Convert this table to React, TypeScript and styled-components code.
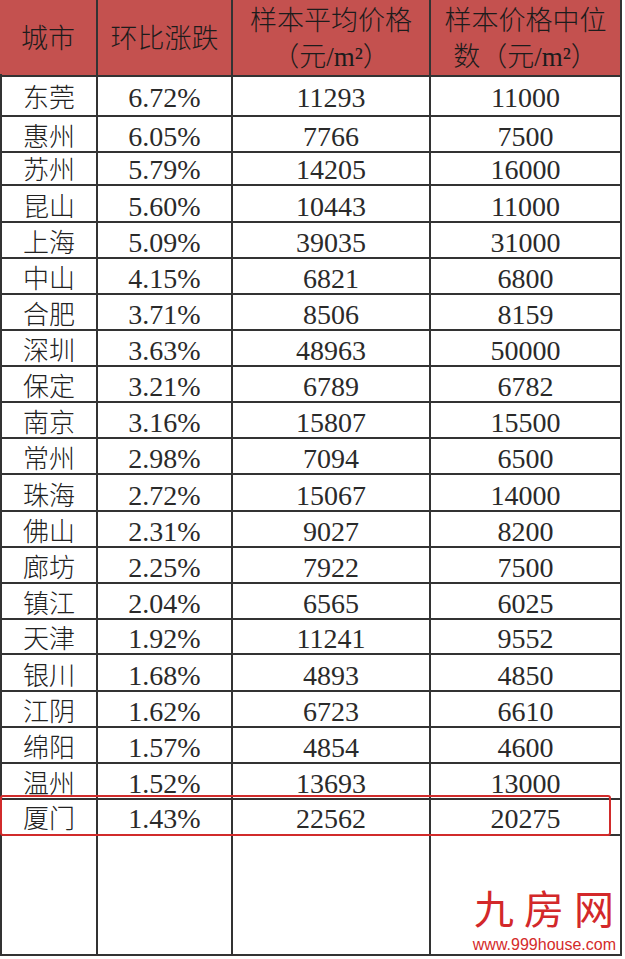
import React from 'react';
import styled, { createGlobalStyle } from 'styled-components';

const rows = [
  { city: '东莞', change: '6.72%', avg: '11293', median: '11000', h: 43 },
  { city: '惠州', change: '6.05%', avg: '7766', median: '7500', h: 33 },
  { city: '苏州', change: '5.79%', avg: '14205', median: '16000', h: 36 },
  { city: '昆山', change: '5.60%', avg: '10443', median: '11000', h: 37 },
  { city: '上海', change: '5.09%', avg: '39035', median: '31000', h: 36 },
  { city: '中山', change: '4.15%', avg: '6821', median: '6800', h: 35 },
  { city: '合肥', change: '3.71%', avg: '8506', median: '8159', h: 37 },
  { city: '深圳', change: '3.63%', avg: '48963', median: '50000', h: 36 },
  { city: '保定', change: '3.21%', avg: '6789', median: '6782', h: 36 },
  { city: '南京', change: '3.16%', avg: '15807', median: '15500', h: 36 },
  { city: '常州', change: '2.98%', avg: '7094', median: '6500', h: 36 },
  { city: '珠海', change: '2.72%', avg: '15067', median: '14000', h: 37 },
  { city: '佛山', change: '2.31%', avg: '9027', median: '8200', h: 36 },
  { city: '廊坊', change: '2.25%', avg: '7922', median: '7500', h: 36 },
  { city: '镇江', change: '2.04%', avg: '6565', median: '6025', h: 35 },
  { city: '天津', change: '1.92%', avg: '11241', median: '9552', h: 36 },
  { city: '银川', change: '1.68%', avg: '4893', median: '4850', h: 37 },
  { city: '江阴', change: '1.62%', avg: '6723', median: '6610', h: 36 },
  { city: '绵阳', change: '1.57%', avg: '4854', median: '4600', h: 36 },
  { city: '温州', change: '1.52%', avg: '13693', median: '13000', h: 34 },
  { city: '厦门', change: '1.43%', avg: '22562', median: '20275', h: 38, marked: true },
];

export default function App() {
  return (
    <>
      <GlobalStyle />
      <Page>
        <Table>
          <HeaderRow>
            <HeaderCell>城市</HeaderCell>
            <HeaderCell>环比涨跌</HeaderCell>
            <HeaderCell>
              样本平均价格
              <br />
              （元/m²）
            </HeaderCell>
            <HeaderCell>
              样本价格中位
              <br />
              数（元/m²）
            </HeaderCell>
          </HeaderRow>
          {rows.map((r) => (
            <Row key={r.city} $h={r.h}>
              <Cell $kind="city">{r.city}</Cell>
              <Cell $kind="num">{r.change}</Cell>
              <Cell $kind="num">{r.avg}</Cell>
              <Cell $kind="num">{r.median}</Cell>
              {r.marked && <Highlight />}
            </Row>
          ))}
          <Row $h={120}>
            <Cell $kind="city" />
            <Cell $kind="num" />
            <Cell $kind="num" />
            <LogoCell>
              <LogoName>九房网</LogoName>
              <LogoUrl>www.999house.com</LogoUrl>
            </LogoCell>
          </Row>
        </Table>
      </Page>
    </>
  );
}

const GlobalStyle = createGlobalStyle`
  html, body {
    margin: 0;
    padding: 0;
    background: #fff;
  }
  * {
    box-sizing: border-box;
  }
`;

const Page = styled.div`
  width: 625px;
  height: 959px;
  background: #fff;
  font-family: 'Liberation Serif', 'Noto Sans CJK SC', serif;
  color: #222;
`;

const Table = styled.div`
  width: 622px;
  display: flex;
  flex-direction: column;
`;

const HeaderRow = styled.div`
  display: grid;
  grid-template-columns: 98px 135px 198px 191px;
  height: 74px;
`;

const HeaderCell = styled.div`
  display: flex;
  align-items: center;
  justify-content: center;
  text-align: center;
  padding-top: 3px;
  background: #c4514f;
  color: #1c1c1c;
  font-size: 27px;
  font-weight: 300;
  line-height: 36px;
  border-right: 2px solid #333;
  border-bottom: 2px solid #333;
`;

const Row = styled.div<{ $h: number }>`
  position: relative;
  display: grid;
  grid-template-columns: 98px 135px 198px 191px;
  height: ${({ $h }) => $h}px;
`;

const Cell = styled.div<{ $kind: 'city' | 'num' }>`
  display: flex;
  align-items: center;
  justify-content: center;
  padding-top: ${({ $kind }) => ($kind === 'city' ? '8px' : '6px')};
  font-size: ${({ $kind }) => ($kind === 'city' ? '26px' : '28px')};
  font-weight: 300;
  line-height: 1;
  color: ${({ $kind }) => ($kind === 'city' ? '#222' : '#2a2a2a')};
  border-right: 2px solid #333;
  border-bottom: 2px solid #333;
  &:first-child {
    border-left: 2px solid #333;
  }
`;

const LogoCell = styled.div`
  display: flex;
  flex-direction: column;
  align-items: flex-end;
  justify-content: flex-end;
  gap: 10px;
  padding-right: 4px;
  padding-bottom: 1px;
  border-right: 2px solid #333;
  border-bottom: 2px solid #333;
`;

const LogoName = styled.div`
  font-family: 'Noto Sans CJK SC', sans-serif;
  font-size: 40px;
  font-weight: 400;
  line-height: 40px;
  height: 40px;
  letter-spacing: 10px;
  margin-right: -8px;
  color: #d3282a;
`;

const LogoUrl = styled.div`
  font-family: 'Liberation Sans', Arial, sans-serif;
  font-size: 16px;
  line-height: 16px;
  height: 16px;
  color: #d42b2b;
`;

const Highlight = styled.div`
  position: absolute;
  top: -3px;
  left: 0;
  width: 611px;
  height: 41px;
  border: 2px solid #d12b2b;
  border-radius: 3px;
  pointer-events: none;
`;
